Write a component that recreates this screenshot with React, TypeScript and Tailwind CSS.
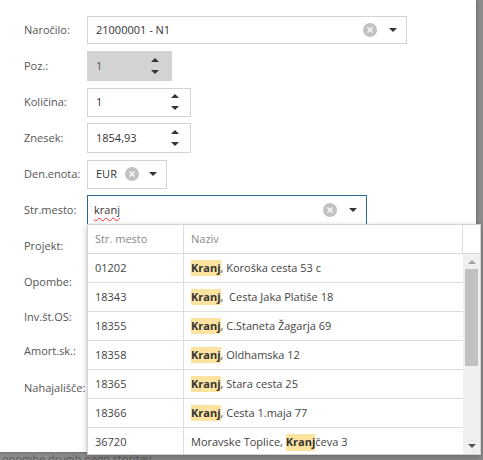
import type { ReactNode } from 'react';

const font = { fontFamily: '"Open Sans", "Noto Sans", sans-serif' };

function Caret() {
  return (
    <svg width="8" height="4" viewBox="0 0 8 4" className="shrink-0">
      <path d="M0 0h8L4 4z" fill="#333" />
    </svg>
  );
}

function ClearIcon() {
  return (
    <span className="flex h-[14px] w-[14px] shrink-0 items-center justify-center rounded-full bg-[#c2c2c2]">
      <svg width="6" height="6" viewBox="0 0 6 6">
        <path d="M0.5 0.5l5 5M5.5 0.5l-5 5" stroke="#fff" strokeWidth="1.4" />
      </svg>
    </span>
  );
}

function Spinner() {
  return (
    <div className="flex flex-col items-center gap-[8px]">
      <svg width="8" height="4" viewBox="0 0 8 4">
        <path d="M0 4h8L4 0z" fill="#333" />
      </svg>
      <svg width="8" height="4" viewBox="0 0 8 4">
        <path d="M0 0h8L4 4z" fill="#333" />
      </svg>
    </div>
  );
}

function Row({ label, children, h = 'h-9' }: { label: string; children?: ReactNode; h?: string }) {
  return (
    <div className={`flex items-center ${h}`}>
      <span className="w-[63px] text-[11px] text-[#555]">{label}</span>
      {children}
    </div>
  );
}

const rows = [
  ['01202', ', Koroška cesta 53 c'],
  ['18343', ',  Cesta Jaka Platiše 18'],
  ['18355', ', C.Staneta Žagarja 69'],
  ['18358', ', Oldhamska 12'],
  ['18365', ', Stara cesta 25'],
  ['18366', ', Cesta 1.maja 77'],
];

function Hl({ children }: { children: ReactNode }) {
  return <span className="bg-[#fde3a0] font-bold text-[#333]">{children}</span>;
}

function Dropdown() {
  return (
    <div className="absolute left-[87px] top-[224px] flex h-[231px] w-[394px] flex-col border border-[#d3d3d3] bg-white text-[11px] shadow-[0_2px_6px_rgba(0,0,0,0.25)]">
      <div className="flex h-[29px] shrink-0 border-b border-[#d9d9d9] text-[#8a8a8a]">
        <div className="flex w-[96px] items-center border-r border-[#dedede] pl-[7px]">Str. mesto</div>
        <div className="flex flex-1 items-center border-r border-[#dedede] pl-[7px]">Naziv</div>
        <div className="w-[17px]" />
      </div>
      <div className="flex min-h-0 flex-1">
        <div className="flex-1 overflow-hidden text-[#444]">
          {rows.map(([code, rest]) => (
            <div key={code} className="flex h-[29px] border-b border-[#dedede]">
              <div className="flex w-[96px] items-center border-r border-[#dedede] pl-[7px]">{code}</div>
              <div className="flex flex-1 items-center whitespace-pre pl-[7px]">
                <Hl>Kranj</Hl>
                {rest}
              </div>
            </div>
          ))}
          <div className="flex h-[29px]">
            <div className="flex w-[96px] items-center border-r border-[#dedede] pl-[7px]">36720</div>
            <div className="flex flex-1 items-center pl-[7px]">
              Moravske Toplice,&nbsp;<Hl>Kranj</Hl>čeva 3
            </div>
          </div>
        </div>
        <div className="flex w-[17px] flex-col items-center bg-[#f0f0f0] py-[6px]">
          <svg width="8" height="4" viewBox="0 0 8 4">
            <path d="M0 4h8L4 0z" fill="#a0a0a0" />
          </svg>
          <div className="mt-[5px] h-[97px] w-[13px] bg-[#c1c1c1]" />
          <div className="flex-1" />
          <svg width="8" height="4" viewBox="0 0 8 4">
            <path d="M0 0h8L4 4z" fill="#555" />
          </svg>
        </div>
      </div>
    </div>
  );
}

export default function App() {
  return (
    <div className="relative h-[460px] w-[483px] overflow-hidden bg-[#8c8c8c]" style={font}>
      <div className="flex h-[452px] w-[476px] flex-col bg-white pl-[24px] pt-[12px] shadow-[0_0_4px_rgba(0,0,0,0.35)]">
        <Row label="Naročilo:">
          <div className="flex h-[28px] w-[320px] items-center border border-[#d3d3d3] pl-[8px] pr-[9px] text-[11px] text-[#333]">
            <span className="flex-1">21000001 - N1</span>
            <ClearIcon />
            <span className="ml-[12px]"><Caret /></span>
          </div>
        </Row>
        <Row label="Poz.:">
          <div className="flex h-[30px] w-[85px] items-center bg-[#d3d3d3] pl-[9px] pr-[13px] text-[11px] text-[#555]">
            <span className="flex-1">1</span>
            <Spinner />
          </div>
        </Row>
        <Row label="Količina:">
          <div className="flex h-[29px] w-[104px] items-center border border-[#d3d3d3] pl-[8px] pr-[11px] text-[11px] text-[#333]">
            <span className="flex-1">1</span>
            <Spinner />
          </div>
        </Row>
        <Row label="Znesek:">
          <div className="flex h-[30px] w-[104px] items-center border border-[#d3d3d3] pl-[8px] pr-[11px] text-[11px] text-[#333]">
            <span className="flex-1">1854,93</span>
            <Spinner />
          </div>
        </Row>
        <Row label="Den.enota:">
          <div className="flex h-[29px] w-[80px] items-center border border-[#d3d3d3] pl-[8px] pr-[9px] text-[11px] text-[#333]">
            <span className="flex-1">EUR</span>
            <ClearIcon />
            <span className="ml-[10px]"><Caret /></span>
          </div>
        </Row>
        <Row label="Str.mesto:">
          <div className="flex h-[31px] w-[280px] items-center border border-[#2a6a9c] pl-[6px] pr-[9px] text-[11px] text-[#333]">
            <span className="flex-1">
              <span className="underline decoration-red-500 decoration-wavy decoration-[1px] underline-offset-[3px]">kranj</span>
            </span>
            <ClearIcon />
            <span className="ml-[12px]"><Caret /></span>
          </div>
        </Row>
        <Row label="Projekt:" />
        <Row label="Opombe:" />
        <Row label="Inv.št.OS:" h="h-[34px]" />
        <Row label="Amort.sk.:" h="h-[34px]" />
        <Row label="Nahajališče:" h="h-[40px]" />
      </div>
      <div className="whitespace-nowrap pl-[2px] pt-[1px] text-[11px] leading-[11px] text-[#5a5a5a]">opombe drugih nego storitev</div>
      <Dropdown />
    </div>
  );
}
